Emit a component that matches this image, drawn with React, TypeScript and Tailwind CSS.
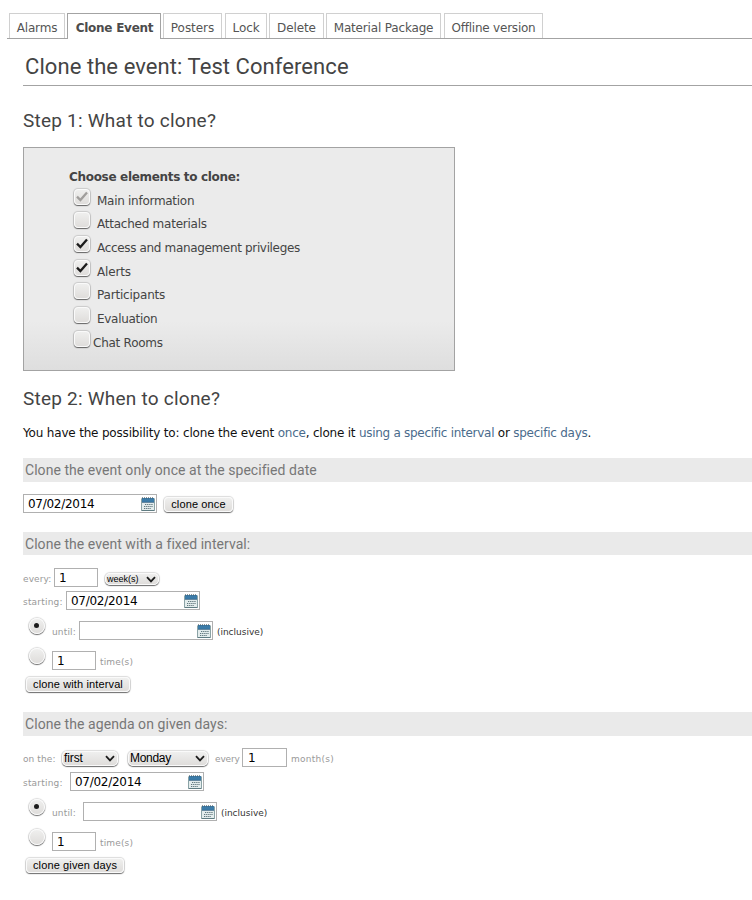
import React from "react";

const SANS = "font-['DejaVu_Sans',sans-serif]";
const RAISED =
  "border border-[#fafafa] bg-gradient-to-b from-[#efefee] to-[#dfdddb] shadow-[0_1px_1px_0_rgba(0,0,0,0.5),0_0_1px_1px_rgba(0,0,0,0.14)]";

const tabs = [
  { label: "Alarms", box: "mr-[2px] w-[56px]", track: "tracking-[-0.15px]" },
  { label: "Clone Event", box: "mr-[2px] w-[94px] pl-px", track: "tracking-[-0.25px]", active: true },
  { label: "Posters", box: "mr-[3px] w-[59px]", track: "tracking-[-0.05px]" },
  { label: "Lock", box: "mr-[2px] w-[42px]", track: "tracking-[-0.1px]" },
  { label: "Delete", box: "mr-[2px] w-[55px]", track: "tracking-[-0.1px]" },
  { label: "Material Package", box: "mr-[3px] w-[115px]", track: "tracking-[-0.17px]" },
  { label: "Offline version", box: "w-[99px]", track: "tracking-[-0.22px]" },
];

const elements = [
  { label: "Main information", row: "h-[23px]", track: "tracking-[-0.28px]", checked: true, disabled: true },
  { label: "Attached materials", row: "h-[24px]", track: "tracking-[-0.24px]" },
  { label: "Access and management privileges", row: "h-[24px]", track: "tracking-[-0.34px]", checked: true },
  { label: "Alerts", row: "h-[23px]", track: "tracking-[-0.15px]", checked: true },
  { label: "Participants", row: "h-[24px]", track: "tracking-[-0.2px]" },
  { label: "Evaluation", row: "h-[24px]", track: "tracking-[-0.3px]" },
  { label: "Chat Rooms", row: "h-[24px]", track: "tracking-[-0.25px]", tight: true },
];

function Checkbox({ checked, disabled }: { checked?: boolean; disabled?: boolean }) {
  return (
    <span className={`mx-px h-[16px] w-[16px] shrink-0 rounded-[4px] ${RAISED}`}>
      {checked && (
        <svg viewBox="0 0 14 14" className="block h-[14px] w-[14px]" fill="none" stroke={disabled ? "#a09e9c" : "#1c1c1c"} strokeWidth="2.3">
          <path d="M2 6.6 L5.4 10 L12 2.4" />
        </svg>
      )}
    </span>
  );
}

function Radio({ checked, className }: { checked?: boolean; className: string }) {
  return (
    <span className={`flex h-[16px] w-[16px] shrink-0 items-center justify-center rounded-full pr-px pb-px ${RAISED} ${className}`}>
      {checked && <span className="h-[5px] w-[5px] rounded-full bg-[#1c1c1c]" />}
    </span>
  );
}

function Calendar() {
  return (
    <svg viewBox="0 0 14 14" className="h-[14px] w-[14px] shrink-0">
      <rect x="0.5" y="1.5" width="13" height="12" rx="0.5" fill="#e3ecec" stroke="#8ba3a6" />
      <path d="M0.5 13.5H13.5" stroke="#5f7c82" />
      <rect x="1" y="1" width="12" height="4" fill="#3b7ba8" />
      <path d="M1 5.4H13" stroke="#335f80" strokeWidth="0.8" />
      <path d="M1 0.9H13" stroke="#46555b" strokeDasharray="1 1" />
      <path d="M4 7.5H12M3 9.5H12M3 11.5H10" stroke="#60777d" strokeDasharray="1.3 0.8" />
    </svg>
  );
}

function Field({ value, className }: { value: string; className: string }) {
  return (
    <span className={`h-[19px] shrink-0 border border-[#b0b0b0] bg-white pl-1 text-[12px] leading-[18px] tracking-[-0.22px] text-black ${className}`}>
      {value}
    </span>
  );
}

function DateField({ value = "", className = "" }: { value?: string; className?: string }) {
  return (
    <span className={`flex h-[19px] w-[134px] shrink-0 items-center justify-between border border-[#b0b0b0] bg-white pr-px pl-1 text-[12px] leading-[18px] tracking-[-0.27px] text-black ${className}`}>
      <span>{value}</span>
      <Calendar />
    </span>
  );
}

function Hint({ children, className = "" }: { children: string; className?: string }) {
  return (
    <span className={`shrink-0 pt-[2px] text-[9px] leading-[19px] whitespace-pre ${className}`}>{children}</span>
  );
}

function Button({ label, className }: { label: string; className: string }) {
  return (
    <button className={`h-[15px] shrink-0 rounded-[4px] text-center font-['Liberation_Sans',sans-serif] text-[11px] leading-[13px] tracking-[0.13px] whitespace-nowrap text-black ${RAISED} ${className}`}>
      {label}
    </button>
  );
}

function Select({ label, className }: { label: string; className: string }) {
  return (
    <span className={`flex shrink-0 items-center justify-between rounded-[5px] pr-[2px] pl-px font-['Liberation_Sans',sans-serif] text-black ${RAISED} ${className}`}>
      <span>{label}</span>
      <svg viewBox="0 0 10 7" className="h-[7px] w-[10px]" fill="none" stroke="#1c1c1c" strokeWidth="1.8">
        <path d="M1 1.2 L5 5.4 L9 1.2" />
      </svg>
    </span>
  );
}

function Section({ title, className }: { title: string; className: string }) {
  return (
    <h3 className={`bg-[#eaeaea] pl-[2px] font-[Roboto,sans-serif] text-[14px] text-[#777] ${className}`}>{title}</h3>
  );
}

function Repeat({ gap, bottom }: { gap: string; bottom: string }) {
  return (
    <>
      <div className="flex h-[30px] items-start">
        <Radio checked className="-mt-[3px] ml-[6px]" />
        <Hint className="ml-[7px] tracking-[0.15px] text-[#999]">until:</Hint>
        <DateField className={gap} />
        <Hint className="ml-1 text-[#333]">(inclusive)</Hint>
      </div>
      <div className={`flex items-start ${bottom}`}>
        <Radio className="-mt-[3px] ml-[6px]" />
        <Field value="1" className="ml-[7px] w-[44px]" />
        <Hint className="ml-1 tracking-[0.15px] text-[#999]">time(s)</Hint>
      </div>
    </>
  );
}

export default function App() {
  return (
    <div className={`h-[900px] w-[752px] overflow-hidden bg-white text-[12px] leading-[14px] text-[#444] ${SANS}`}>
      <nav className="ml-[7px] flex h-[39px] items-end border-b border-[#a3a3a3] pl-[2px]">
        {tabs.map((t) => (
          <div
            key={t.label}
            className={`shrink-0 border border-b-0 bg-white pt-[7px] text-center whitespace-nowrap ${t.box} ${t.track} ${
              t.active ? "-mb-px h-[26px] border-[#a3a3a3] font-bold text-[#4c4c4c]" : "h-[25px] border-[#d0d0d0] text-[#555]"
            }`}
          >
            {t.label}
          </div>
        ))}
      </nav>

      <main className="ml-[23px]">
        <h1 className="h-[47px] border-b border-[#a3a3a3] pt-[15px] pl-[2px] font-[Roboto,sans-serif] text-[22px] leading-[26px] tracking-[0.07px]">
          Clone the event: Test Conference
        </h1>
        <h2 className="h-[61px] pt-[24px] font-[Roboto,sans-serif] text-[19px] leading-[21px] tracking-[0.23px]">
          Step 1: What to clone?
        </h2>

        <section className="h-[224px] w-[432px] border border-[#a3a3a3] bg-[linear-gradient(#ebebeb_78%,#dedede)] pt-[22px] pl-[45px]">
          <div className="h-[19px] font-bold tracking-[-0.32px]">Choose elements to clone:</div>
          {elements.map((e) => (
            <div key={e.label} className={`flex items-start pl-[4px] ${e.row}`}>
              <Checkbox checked={e.checked} disabled={e.disabled} />
              <span className={`pt-[5px] ${e.tight ? "ml-[2px]" : "ml-[6px]"} ${e.track}`}>{e.label}</span>
            </div>
          ))}
        </section>

        <h2 className="mt-[17px] h-[38px] font-[Roboto,sans-serif] text-[19px] leading-[21px] tracking-[0.23px]">
          Step 2: When to clone?
        </h2>
        <p className="h-[32px] tracking-[-0.22px] text-[#111]">
          <span className="tracking-[-0.18px]">You have the possibility to: clone the event </span>
          <a className="text-[#4a6b8c]">once</a>, clone it{" "}
          <a className="tracking-[-0.28px] text-[#4a6b8c]">using a specific interval</a> or <a className="tracking-[-0.25px] text-[#4a6b8c]">specific days</a>.
        </p>

        <Section title="Clone the event only once at the specified date" className="h-[24px] leading-[25px] tracking-[0.05px]" />
        <div className="mt-[12px] flex h-[38px] items-start">
          <DateField value="07/02/2014" />
          <Button label="clone once" className="mt-[3px] ml-[7px] w-[69px]" />
        </div>

        <Section title="Clone the event with a fixed interval:" className="h-[23px] leading-[25px] tracking-[0.05px]" />
        <div className="mt-[13px] flex h-[23px] items-start">
          <Hint className="w-[31px] tracking-[0.1px] text-[#999]">every:</Hint>
          <Field value="1" className="w-[44px]" />
          <Select label="week(s)" className="mt-[5px] ml-[7px] h-[12px] w-[54px] pl-[2px] text-[9px] leading-[10px]" />
        </div>
        <div className="flex h-[30px] items-start">
          <Hint className="w-[43px] tracking-[0.2px] text-[#999]">starting:</Hint>
          <DateField value="07/02/2014" />
        </div>
        <Repeat gap="ml-[3px]" bottom="h-[26px]" />
        <Button label="clone with interval" className="ml-[3px] block w-[104px]" />

        <Section title="Clone the agenda on given days:" className="mt-[20px] h-[24px] leading-[25px] tracking-[0.07px]" />
        <div className="mt-[12px] flex h-[24px] items-start">
          <Hint className="w-[39px] tracking-[0.1px] text-[#999]">on the:</Hint>
          <Select label="first" className="mt-[3px] h-[15px] w-[56px] text-[12px] leading-[13px] tracking-[-0.1px]" />
          <Select label="Monday" className="mt-[3px] ml-[10px] h-[15px] w-[80px] text-[12px] leading-[13px] tracking-[-0.3px]" />
          <Hint className="ml-[7px] w-[27px] tracking-[-0.15px] text-[#999]">every</Hint>
          <Field value="1" className="w-[45px] pl-[5px]" />
          <Hint className="ml-1 tracking-[0.25px] text-[#999]">month(s)</Hint>
        </div>
        <div className="flex h-[30px] items-start">
          <Hint className="w-[47px] tracking-[0.2px] text-[#999]">starting:</Hint>
          <DateField value="07/02/2014" />
        </div>
        <Repeat gap="ml-[7px]" bottom="h-[26px]" />
        <Button label="clone given days" className="ml-[3px] block w-[98px]" />
      </main>
    </div>
  );
}
